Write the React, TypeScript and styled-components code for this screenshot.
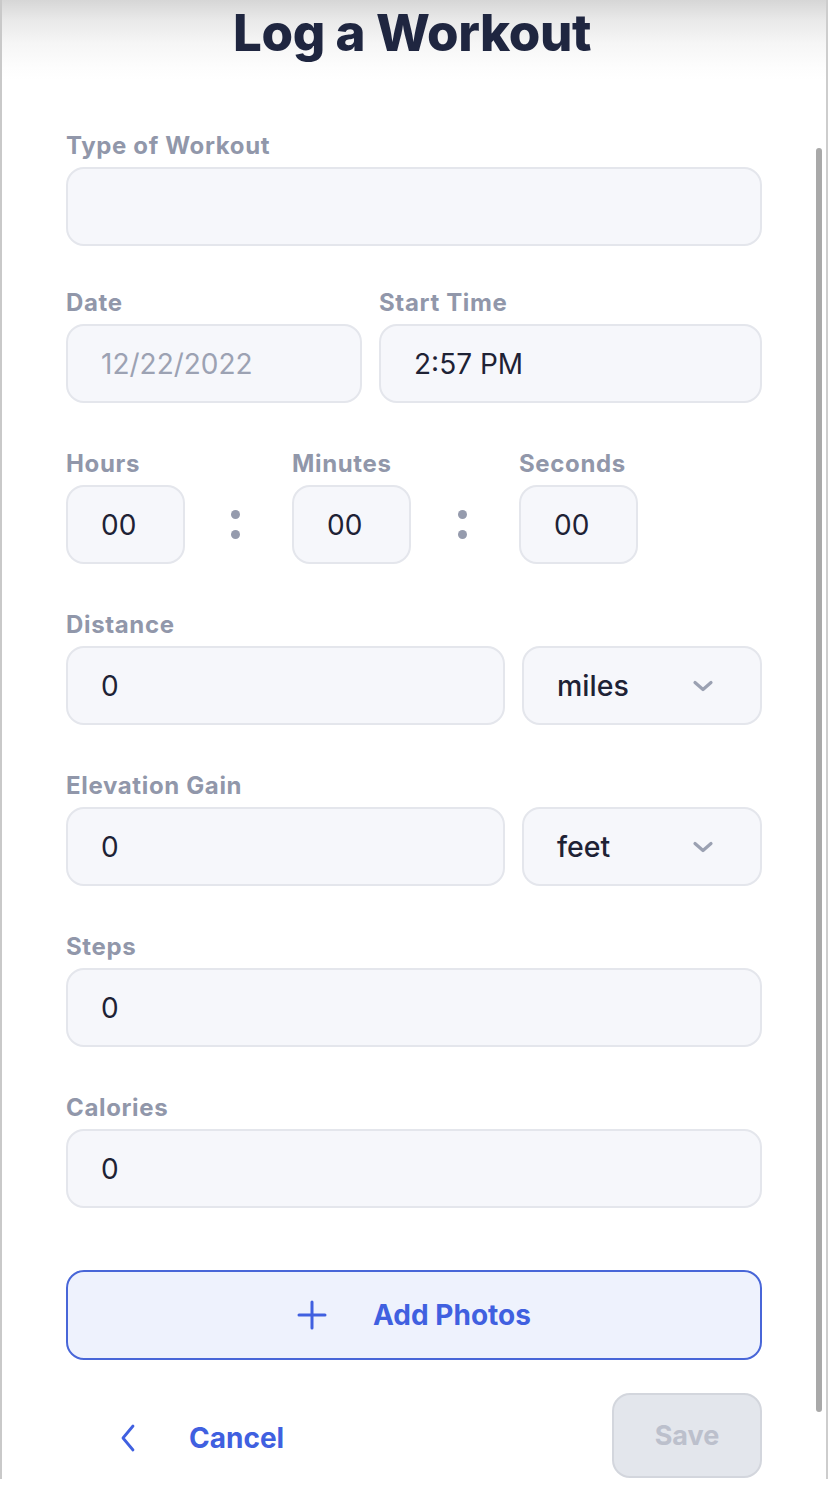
import React from "react";
import styled, { createGlobalStyle } from "styled-components";

const GlobalStyle = createGlobalStyle`
  html, body { margin: 0; padding: 0; background: #ffffff; }
  body { font-family: Inter, "Noto Sans", Arial, sans-serif; -webkit-font-smoothing: antialiased; }
  * { box-sizing: border-box; }
`;

const Frame = styled.div`
  position: relative;
  height: 1479px;
  width: 828px;
  border-left: 2px solid #c9c9c9;
  border-right: 2px solid #cdcdcd;
  display: flex;
  flex-direction: column;
  background: #ffffff;
`;

const Header = styled.header`
  height: 80px;
  padding-top: 3px;
  display: flex;
  justify-content: center;
  background: linear-gradient(to bottom, #d6d6d6 0%, #e9e9e9 25%, #f6f6f6 55%, #fdfdfd 85%, #ffffff 100%);
`;

const Title = styled.h1`
  margin: 0;
  margin-right: 4px;
  font-size: 51px;
  line-height: 60px;
  font-weight: 800;
  letter-spacing: -0.4px;
  color: #1f2640;
`;

const Form = styled.form`
  display: flex;
  flex-direction: column;
  padding: 0 64px;
`;

const Field = styled.div<{ $top: number }>`
  display: flex;
  flex-direction: column;
  gap: 8px;
  margin-top: ${(p) => p.$top}px;
`;

const Label = styled.label`
  font-size: 24px;
  line-height: 26px;
  font-weight: 700;
  letter-spacing: 0.65px;
  color: #9197aa;
`;

const Input = styled.input<{ $muted?: boolean }>`
  display: block;
  width: 100%;
  height: 79px;
  margin: 0;
  padding: 0 33px;
  border: 2px solid #e4e6ec;
  border-radius: 18px;
  background: #f6f7fb;
  font-family: Inter, "Noto Sans", Arial, sans-serif;
  font-size: 28px;
  font-weight: 400;
  color: ${(p) => (p.$muted ? "#9ca2b3" : "#1e2235")};
  outline: none;
`;

const Pair = styled.div<{ $cols: string; $top?: number }>`
  display: grid;
  grid-template-columns: ${(p) => p.$cols};
  column-gap: 17px;
  margin-top: ${(p) => p.$top ?? 0}px;
`;

const Col = styled.div`
  display: flex;
  flex-direction: column;
  gap: 8px;
`;

const TimeGrid = styled.div`
  display: grid;
  grid-template-columns: 119px 107px 119px 108px 119px;
  row-gap: 8px;
  margin-top: 48px;
`;

const TimeLabel = styled(Label)<{ $col: number }>`
  grid-row: 1;
  grid-column: ${(p) => p.$col};
  white-space: nowrap;
`;

const TimeBox = styled(Input)<{ $col: number }>`
  grid-row: 2;
  grid-column: ${(p) => p.$col};
`;

const Colon = styled.div<{ $col: number }>`
  grid-row: 2;
  grid-column: ${(p) => p.$col};
  display: flex;
  flex-direction: column;
  align-items: center;
  justify-content: center;
  gap: 11px;
  padding-right: 6px;
  &::before, &::after {
    content: "";
    width: 9px;
    height: 9px;
    border-radius: 50%;
    background: #959bad;
  }
`;

const Select = styled.div`
  height: 79px;
  display: flex;
  align-items: center;
  justify-content: space-between;
  padding: 0 46px 0 33px;
  border: 2px solid #e4e6ec;
  border-radius: 18px;
  background: #f6f7fb;
  font-size: 28.5px;
  font-weight: 500;
  color: #1e2235;
`;

const AddButton = styled.button`
  margin-top: 62px;
  height: 90px;
  width: 100%;
  display: flex;
  align-items: center;
  justify-content: center;
  gap: 46px;
  border: 2px solid #4866d8;
  border-radius: 18px;
  background: #eef2fd;
  font-family: Inter, "Noto Sans", Arial, sans-serif;
  font-size: 28px;
  font-weight: 700;
  color: #4060e0;
  cursor: pointer;
`;

const Footer = styled.div`
  margin-top: 33px;
  display: flex;
  align-items: center;
  justify-content: space-between;
`;

const CancelLink = styled.button`
  display: flex;
  align-items: center;
  gap: 53px;
  margin-left: 54px;
  margin-top: 5px;
  padding: 0;
  border: none;
  background: none;
  font-family: Inter, "Noto Sans", Arial, sans-serif;
  font-size: 28px;
  font-weight: 700;
  color: #4060e0;
`;

const SaveButton = styled.button`
  width: 150px;
  height: 85px;
  border: 2px solid #d3d6dd;
  border-radius: 18px;
  background: #e3e6ec;
  font-family: Inter, "Noto Sans", Arial, sans-serif;
  font-size: 27px;
  font-weight: 700;
  color: #bcc0cc;
`;

const ScrollThumb = styled.div`
  position: absolute;
  right: 4px;
  top: 148px;
  width: 6px;
  height: 1264px;
  border-radius: 3px;
  background: #a9a9a9;
`;

const Chevron = () => (
  <svg width="22" height="14" viewBox="0 0 22 14" fill="none">
    <path d="M3 3.5 L11 10.5 L19 3.5" stroke="#9ba1b2" strokeWidth="3.2" strokeLinecap="round" strokeLinejoin="round" />
  </svg>
);

const Plus = () => (
  <svg width="30" height="30" viewBox="0 0 30 30" fill="none">
    <path d="M15 2 V28 M2 15 H28" stroke="#4060e0" strokeWidth="3" strokeLinecap="round" />
  </svg>
);

const Back = () => (
  <svg width="16" height="28" viewBox="0 0 16 28" fill="none">
    <path d="M13 2 L3 14 L13 26" stroke="#4060e0" strokeWidth="2.8" strokeLinecap="round" strokeLinejoin="round" />
  </svg>
);

export default function App() {
  return (
    <>
      <GlobalStyle />
      <Frame>
        <Header>
          <Title>Log a Workout</Title>
        </Header>
        <Form onSubmit={(e) => e.preventDefault()}>
          <Field $top={53}>
            <Label>Type of Workout</Label>
            <Input readOnly value="" />
          </Field>

          <Pair $cols="296px 1fr" $top={44}>
            <Col>
              <Label>Date</Label>
              <Input readOnly $muted value="12/22/2022" />
            </Col>
            <Col>
              <Label>Start Time</Label>
              <Input readOnly value="2:57 PM" />
            </Col>
          </Pair>

          <TimeGrid>
            <TimeLabel $col={1}>Hours</TimeLabel>
            <TimeLabel $col={3}>Minutes</TimeLabel>
            <TimeLabel $col={5}>Seconds</TimeLabel>
            <TimeBox $col={1} readOnly value="00" />
            <Colon $col={2} />
            <TimeBox $col={3} readOnly value="00" />
            <Colon $col={4} />
            <TimeBox $col={5} readOnly value="00" />
          </TimeGrid>

          <Field $top={48}>
            <Label>Distance</Label>
            <Pair $cols="1fr 240px">
              <Input readOnly value="0" />
              <Select>
                miles
                <Chevron />
              </Select>
            </Pair>
          </Field>

          <Field $top={48}>
            <Label>Elevation Gain</Label>
            <Pair $cols="1fr 240px">
              <Input readOnly value="0" />
              <Select>
                feet
                <Chevron />
              </Select>
            </Pair>
          </Field>

          <Field $top={48}>
            <Label>Steps</Label>
            <Input readOnly value="0" />
          </Field>

          <Field $top={48}>
            <Label>Calories</Label>
            <Input readOnly value="0" />
          </Field>

          <AddButton type="button">
            <Plus />
            Add Photos
          </AddButton>

          <Footer>
            <CancelLink type="button">
              <Back />
              Cancel
            </CancelLink>
            <SaveButton type="submit" disabled>
              Save
            </SaveButton>
          </Footer>
        </Form>
        <ScrollThumb />
      </Frame>
    </>
  );
}
